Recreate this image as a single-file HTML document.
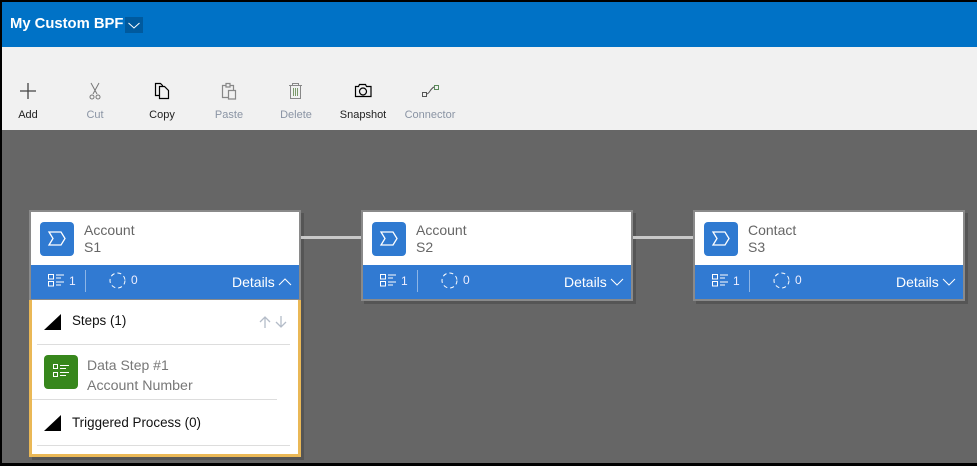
<!DOCTYPE html>
<html><head><meta charset="utf-8"><style>
html,body{margin:0;padding:0}
body{width:977px;height:466px;position:relative;overflow:hidden;background:#000;font-family:"Liberation Sans",sans-serif}
div,span,svg{position:absolute;white-space:nowrap}
.tb{font-size:11px;color:#222;top:109px;transform:translateX(-50%)}
.dis{color:#8a94a4}
.card{top:210px;width:268px;height:87px;background:#fff;border:2px solid #8a8a8a;box-shadow:3px 3px 0 #555}
.ic{left:9px;top:10px;width:34px;height:34px;background:#2f7ad1;border-radius:4px}
.t1{left:53px;top:10px;font-size:14px;color:#666}
.t2{left:53px;top:27px;font-size:14px;color:#666}
.band{left:0;top:53px;width:268px;height:34px;background:#317ad2;color:#fff}
.n{font-size:12px;color:#eef}
.det{left:201px;top:9px;font-size:14px;color:#fff}
.sep{left:54px;top:5px;width:1px;height:22px;background:#8db5e6}
</style></head><body>
<div style="left:2px;top:2px;width:975px;height:461px;background:#666"></div>
<div style="left:2px;top:2px;width:975px;height:45px;background:#0072c6"></div>
<div style="left:2px;top:47px;width:975px;height:83px;background:#f1f1f1"></div>
<div style="left:10px;top:16px;font-size:14.800px;font-weight:bold;color:#fff">My Custom BPF</div>
<div style="left:125px;top:17px;width:18px;height:16px;background:#005a9e"></div>
<svg style="left:125px;top:17px" width="18" height="16" fill="none" stroke="#fff"><path d="M3.500 6l5.500 5 5.500-5"/></svg>

<svg style="left:0;top:75px" width="480" height="30" fill="none">
<path d="M20 16h16M28 8v16" stroke="#444" stroke-width="1.300"/>
<g stroke="#777"><path d="M91 8l6 11M99 8l-6 11"/><circle cx="92" cy="22" r="2"/><circle cx="98" cy="22" r="2"/></g>
<g stroke="#000" stroke-width="1.200"><path d="M155.500 8.500h5l2 2v10h-7z"/><path d="M159.500 11.500h5l4 4v8h-9z" fill="#f1f1f1"/></g>
<g stroke="#888" stroke-width="1.200"><path d="M222.500 10.500h11v12h-11z"/><path d="M226 8.500h4v3.500h-4z" fill="#f1f1f1"/><path d="M228.500 15.500h7v8.500h-7z" fill="#f1f1f1"/></g>
<g stroke="#888"><path d="M289 10.500h13M292.500 10.500v-2h6v2M290.500 10.500v13h10v-13"/><path d="M293.500 13v8M295.500 13v8M297.500 13v8" stroke="#7a9a6a"/></g>
<g stroke="#000" stroke-width="1.200"><path d="M355.500 11.500h3l1-2h6l1 2h4.500v10h-15.500z"/><circle cx="363" cy="16.500" r="3.500"/></g>
<g stroke="#555"><path d="M422.500 17.500h4v4h-4z"/><path d="M434.500 10.500h4v4h-4z" stroke="#5a8a5a"/><path d="M427 19c3-1 3-5 7-7"/></g>
</svg>
<div class="tb" style="left:28px">Add</div>
<div class="tb dis" style="left:95px">Cut</div>
<div class="tb" style="left:162px">Copy</div>
<div class="tb dis" style="left:229px">Paste</div>
<div class="tb dis" style="left:296px">Delete</div>
<div class="tb" style="left:363px">Snapshot</div>
<div class="tb dis" style="left:430px">Connector</div>

<div class="card" style="left:29px">
 <div class="ic"></div><svg style="left:9px;top:10px" width="34" height="34" fill="none" stroke="#fff" stroke-width="1.300"><path d="M9 10h12l4 6.500-4 6.500H9l4-6.500z"/></svg>
 <div class="t1">Account</div><div class="t2">S1</div>
 <div class="band">
  <svg style="left:17px;top:9px" width="18" height="14" fill="none" stroke="#fff"><path d="M.5 .5h5v4.500h-5zM.5 7.500h5v4.500h-5zM8 1h8M8 4h5M8 8h8M8 11h5"/></svg>
  <div class="n" style="left:38px;top:9px">1</div><div class="sep"></div>
  <svg style="left:78px;top:7px" width="18" height="18" fill="none" stroke="#fff" stroke-dasharray="4 3"><circle cx="8.500" cy="8.500" r="7.500"/></svg>
  <div class="n" style="left:100px;top:8px">0</div>
  <div class="det">Details</div>
  <svg style="left:247px;top:12px" width="14" height="10" fill="none" stroke="#fff"><path d="M1 8l6-6 6 6"/></svg>
 </div>
</div>

<div class="card" style="left:361px">
 <div class="ic"></div><svg style="left:9px;top:10px" width="34" height="34" fill="none" stroke="#fff" stroke-width="1.300"><path d="M9 10h12l4 6.500-4 6.500H9l4-6.500z"/></svg>
 <div class="t1">Account</div><div class="t2">S2</div>
 <div class="band">
  <svg style="left:17px;top:9px" width="18" height="14" fill="none" stroke="#fff"><path d="M.5 .5h5v4.500h-5zM.5 7.500h5v4.500h-5zM8 1h8M8 4h5M8 8h8M8 11h5"/></svg>
  <div class="n" style="left:38px;top:9px">1</div><div class="sep"></div>
  <svg style="left:78px;top:7px" width="18" height="18" fill="none" stroke="#fff" stroke-dasharray="4 3"><circle cx="8.500" cy="8.500" r="7.500"/></svg>
  <div class="n" style="left:100px;top:8px">0</div>
  <div class="det">Details</div>
  <svg style="left:247px;top:12px" width="14" height="10" fill="none" stroke="#fff"><path d="M1 2l6 6 6-6"/></svg>
 </div>
</div>

<div class="card" style="left:693px">
 <div class="ic"></div><svg style="left:9px;top:10px" width="34" height="34" fill="none" stroke="#fff" stroke-width="1.300"><path d="M9 10h12l4 6.500-4 6.500H9l4-6.500z"/></svg>
 <div class="t1">Contact</div><div class="t2">S3</div>
 <div class="band">
  <svg style="left:17px;top:9px" width="18" height="14" fill="none" stroke="#fff"><path d="M.5 .5h5v4.500h-5zM.5 7.500h5v4.500h-5zM8 1h8M8 4h5M8 8h8M8 11h5"/></svg>
  <div class="n" style="left:38px;top:9px">1</div><div class="sep"></div>
  <svg style="left:78px;top:7px" width="18" height="18" fill="none" stroke="#fff" stroke-dasharray="4 3"><circle cx="8.500" cy="8.500" r="7.500"/></svg>
  <div class="n" style="left:100px;top:8px">0</div>
  <div class="det">Details</div>
  <svg style="left:247px;top:12px" width="14" height="10" fill="none" stroke="#fff"><path d="M1 2l6 6 6-6"/></svg>
 </div>
</div>

<div style="left:301px;top:236px;width:60px;height:3px;background:#c8c8c8"></div>
<div style="left:633px;top:236px;width:60px;height:3px;background:#c8c8c8"></div>

<!-- expanded panel -->
<div style="left:29px;top:300px;width:266px;height:154px;background:#fff;border:3px solid #eab856;border-top:0;box-shadow:3px 3px 0 #555"></div>

<svg style="left:44px;top:314px" width="18" height="17"><path d="M17 0v16H0z" fill="#000"/></svg>
<div style="left:72px;top:313px;font-size:13.400px;color:#111">Steps (1)</div>
<svg style="left:258px;top:315px" width="30" height="14" fill="none" stroke="#b4bcc8" stroke-width="1.300"><path d="M7 13V2M2 7l5-5 5 5M23 1v11M18 7l5 5 5-5"/></svg>
<div style="left:37px;top:344px;width:253px;height:1px;background:#ddd"></div>
<div style="left:44px;top:355px;width:34px;height:34px;background:#37871c;border-radius:4px"></div>
<svg style="left:44px;top:355px" width="34" height="34" fill="none" stroke="#fff"><path d="M9.500 9.500h4v4h-4zM9.500 17.500h4v4h-4zM16 10.500h9M16 13.500h6M16 17.500h9M16 20.500h6"/></svg>
<div style="left:87px;top:357px;font-size:14px;color:#777">Data Step #1</div>
<div style="left:87px;top:378px;font-size:14.200px;color:#777">Account Number</div>
<div style="left:32px;top:399px;width:245px;height:1px;background:#ddd"></div>
<svg style="left:44px;top:415px" width="18" height="17"><path d="M17 0v16H0z" fill="#000"/></svg>
<div style="left:72px;top:415px;font-size:13.400px;color:#111">Triggered Process (0)</div>
<div style="left:37px;top:445px;width:253px;height:1px;background:#ddd"></div>
</body></html>
